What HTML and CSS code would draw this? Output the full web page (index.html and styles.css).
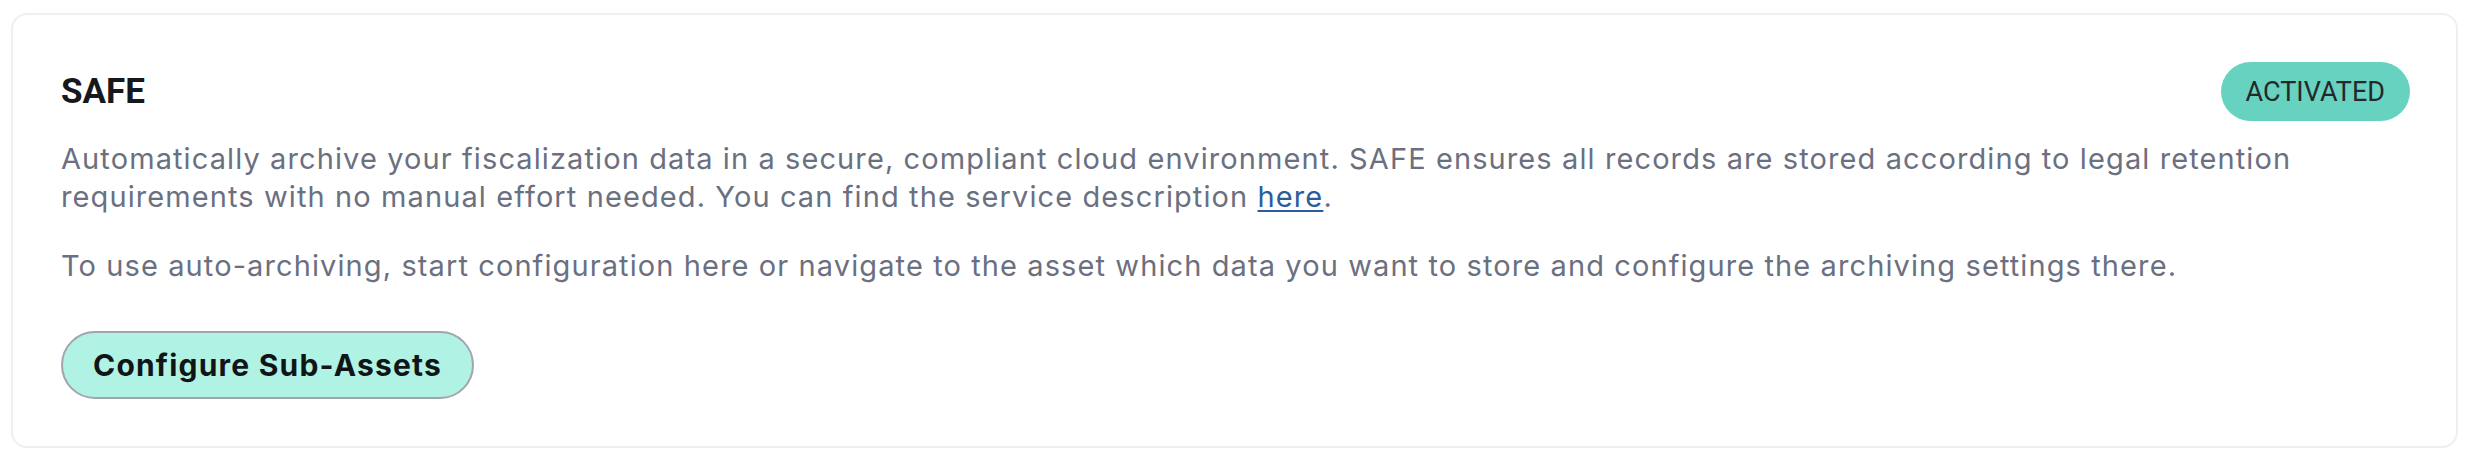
FILE: index.html
```html
<!DOCTYPE html>
<html lang="en">
<head>
<meta charset="utf-8">
<title>SAFE</title>
<link rel="stylesheet" href="styles.css">
</head>
<body>
<div class="page">
  <section class="card">
    <div class="card-head">
      <h2 class="title">SAFE</h2>
      <span class="badge">ACTIVATED</span>
    </div>
    <p class="desc">Automatically archive your fiscalization data in a secure, compliant cloud environment. SAFE ensures all records are stored according to legal retention requirements with no manual effort needed. You can find the service description <a class="link" href="#">here</a>.</p>
    <p class="desc desc-second">To use auto-archiving, start configuration here or navigate to the asset which data you want to store and configure the archiving settings there.</p>
    <div class="actions">
      <button class="btn" type="button">Configure Sub-Assets</button>
    </div>
  </section>
</div>
</body>
</html>
```
FILE: styles.css
```css
html, body {
  margin: 0;
  padding: 0;
  background: #ffffff;
}

.page {
  padding: 13px 18px 16px 11px;
  font-family: Inter, "Noto Sans", sans-serif;
}

.card {
  box-sizing: border-box;
  height: 435px;
  border: 2px solid #efeff1;
  border-radius: 16px;
  padding: 47px 46px 46px 48px;
  background: #fff;
}

.card-head {
  display: flex;
  align-items: center;
  justify-content: space-between;
  height: 59px;
}

.title {
  margin: 0;
  font-family: Roboto, "Liberation Sans", sans-serif;
  font-weight: 700;
  font-size: 35px;
  color: #15191d;
}

.badge {
  display: inline-flex;
  align-items: center;
  height: 59px;
  padding: 0 25px;
  border-radius: 30px;
  background: #68d2c0;
  color: #25282b;
  font-family: Roboto, "Liberation Sans", sans-serif;
  font-size: 27px;
}

.desc {
  margin: 19px 0 0;
  font-size: 29px;
  line-height: 38px;
  letter-spacing: 1.1px;
  color: #6b7080;
}

.desc-second {
  margin-top: 31px;
}

.link {
  color: #2c5c9c;
  text-decoration: underline;
  text-underline-offset: 3px;
}

.actions {
  display: flex;
  margin-top: 46px;
}

.btn {
  box-sizing: border-box;
  height: 68px;
  padding: 0 30px;
  border: 2px solid #a3a4ae;
  border-radius: 34px;
  background: #b0f3e4;
  color: #121518;
  font-family: Inter, "Noto Sans", sans-serif;
  font-weight: 700;
  font-size: 30px;
  letter-spacing: 1.2px;
}
```
